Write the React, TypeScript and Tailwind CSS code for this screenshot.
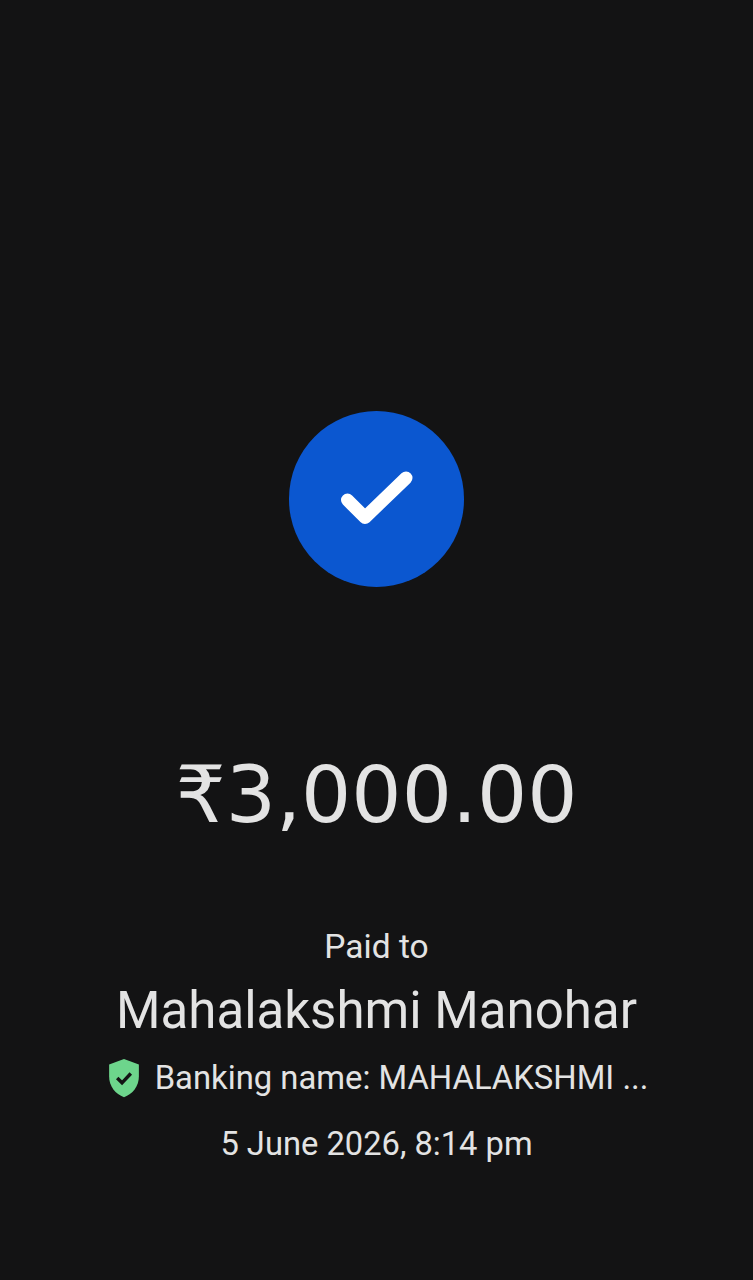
export default function App() {
  return (
    <div className="w-[753px] h-[1280px] bg-[#131314] flex flex-col items-center text-[#e3e3e3] [font-family:Roboto,sans-serif] overflow-hidden">
      <div className="mt-[411px] w-[175px] h-[176px] rounded-full bg-[#0b57d0] flex items-center justify-center">
        <svg width="74" height="58" viewBox="0 0 74 58" fill="none">
          <path d="M7.5 30 L25 47.5 L66 8" stroke="#fff" strokeWidth="13" strokeLinecap="round" strokeLinejoin="round" />
        </svg>
      </div>
      <div className="mt-[162px] text-[79px] leading-[92px] [font-family:'DejaVu_Sans',sans-serif]">₹3,000.00</div>
      <div className="mt-[84px] text-[33.5px] leading-[44px]">Paid to</div>
      <div className="mt-[10px] text-[51px] leading-[64px]">Mahalakshmi Manohar</div>
      <div className="mt-[13px] ml-[2px] flex items-center gap-[14px] text-[32.8px] leading-[44px]">
        <svg width="34" height="40" viewBox="0 0 24 28">
          <path d="M12 0.5 L22.5 4.5 V13 C22.5 20 18 25.5 12 27.5 C6 25.5 1.5 20 1.5 13 V4.5 Z" fill="#6dd58c" />
          <path d="M7.2 14 L10.6 17.4 L16.8 10.8" stroke="#131314" strokeWidth="2.4" fill="none" />
        </svg>
        <span>Banking name: MAHALAKSHMI ...</span>
      </div>
      <div className="mt-[22px] text-[32.7px] leading-[44px]">5 June 2026, 8:14 pm</div>
    </div>
  );
}
